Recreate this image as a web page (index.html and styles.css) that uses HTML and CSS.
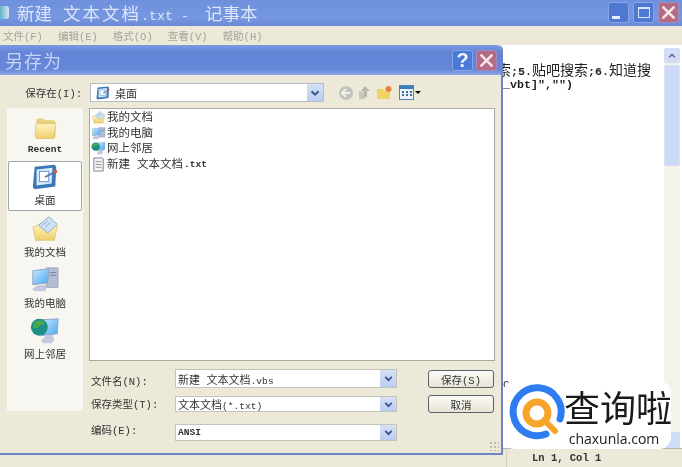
FILE: index.html
```html
<!DOCTYPE html>
<html lang="zh">
<head>
<meta charset="utf-8">
<title>另存为</title>
<link rel="stylesheet" href="styles.css">
</head>
<body>
<svg class="defs" width="0" height="0" aria-hidden="true">
  <defs>
    <linearGradient id="fold" x1="0" y1="0" x2="0" y2="1"><stop offset="0" stop-color="#fff4c0"/><stop offset="1" stop-color="#efcf6c"/></linearGradient>
    <linearGradient id="scr" x1="0" y1="0" x2="1" y2="1"><stop offset="0" stop-color="#c8eaff"/><stop offset="1" stop-color="#4aa6ee"/></linearGradient>
    <symbol id="i-folder" viewBox="0 0 32 32">
      <path d="M6 8c0-2 1-3 3-3h5l2 2h9c2 0 3 1 3 3v15c0 2-1 3-3 3H9c-2 0-3-1-3-3z" fill="#e8cf7c"/>
      <path d="M5 13c0-1 1-2 2-2h19c2 0 3 1 2 3l-2 12c0 1-1 2-2 2H8c-2 0-3-1-3-3z" fill="url(#fold)" stroke="#d6b862" stroke-width=".7"/>
    </symbol>
    <symbol id="i-desktop" viewBox="0 0 32 32">
      <path d="M5 5l21-2 2 2-1 21-22 3-2-2z" fill="#3b78b5"/>
      <path d="M7 8l17-2-1 17-16 2z" fill="#d9ecfa"/>
      <rect x="10" y="10" width="10" height="11" fill="#fff" stroke="#5b93c7"/>
      <path d="M16 16l10-5" stroke="#5478a8" stroke-width="2"/>
      <circle cx="27" cy="10" r="2" fill="#d8534a"/>
    </symbol>
    <symbol id="i-docs" viewBox="0 0 32 32">
      <path d="M3 14l10-4 16 3-3 15H6z" fill="url(#fold)" stroke="#d6b862" stroke-width=".7"/>
      <path d="M9 12L20 3l9 8-10 9z" fill="#cfe3f7" stroke="#8ea9c9"/>
      <path d="M13 12l6-5M16 14l6-5" stroke="#8ea9c9"/>
    </symbol>
    <symbol id="i-pc" viewBox="0 0 32 32">
      <rect x="17" y="3" width="13" height="21" rx="1" fill="#b3bcd2" stroke="#8790aa" stroke-width=".6"/>
      <path d="M21 8h7M21 11h7" stroke="#79829b"/>
      <path d="M3 6l17-2-1 15-16 2z" fill="url(#scr)" stroke="#8fa3c4"/>
      <path d="M7 22l8-1 3 3-2 4H6l-4-2z" fill="#c5c8de"/>
    </symbol>
    <symbol id="i-net" viewBox="0 0 32 32">
      <path d="M12 4l18-1-1 16-17 2z" fill="url(#scr)" stroke="#8fa3c4"/>
      <path d="M17 21l7-1 2 5-3 4h-9l-2-3z" fill="#c5c8de"/>
      <circle cx="10" cy="12" r="9" fill="#1f8f86"/>
      <path d="M4 7c4-3 9-3 12 0-2 3-3 3-5 2-1 4-5 5-8 3z" fill="#4aa84f"/>
    </symbol>
    <symbol id="i-txt" viewBox="0 0 16 16">
      <path d="M3 1h9l1 1v13H3z" fill="#f4f4f4" stroke="#7a7f88"/>
      <path d="M5 5h6M5 8h6M5 11h6" stroke="#8a8f98"/>
    </symbol>
    <symbol id="i-chev" viewBox="0 0 16 16">
      <path d="M4 6l4 4 4-4" fill="none" stroke="#37548c" stroke-width="2.2"/>
    </symbol>
    <symbol id="i-chev-up" viewBox="0 0 16 16">
      <path d="M4 10l4-4 4 4" fill="none" stroke="#5a74a8" stroke-width="2.2"/>
    </symbol>
    <symbol id="i-x" viewBox="0 0 16 16">
      <path d="M2.500 2.500l11 11M13.500 2.500l-11 11" fill="none" stroke="#f6e6e6" stroke-width="2.800" stroke-linecap="round"/>
    </symbol>
  </defs>
</svg>

<div class="desktop">
  <section class="notepad">
    <header class="title">
      <span class="title-icon"></span>
      <h1 class="title-text"><span class="cjk">新建</span> <span class="cjk cjk-wide">文本文档</span>.txt -  <span class="cjk">记事本</span></h1>
      <div class="caps">
        <button class="cap cap-min" aria-label="最小化"><span class="min-bar"></span></button>
        <button class="cap cap-max" aria-label="最大化"><span class="max-box"></span></button>
        <button class="cap cap-close" aria-label="关闭"><svg width="15" height="15"><use href="#i-x"/></svg></button>
      </div>
    </header>
    <nav class="menu">
      <span>文件(F)</span><span>编辑(E)</span><span>格式(O)</span><span>查看(V)</span><span>帮助(H)</span>
    </nav>
    <div class="edit">
      <div class="edit-text">
        <div class="edit-line"><span class="cjk14">索</span>;5.<span class="cjk14">贴吧搜索</span>;6.<span class="cjk14">知道搜</span></div>
        <div class="edit-line">_vbt]","")</div>
      </div>
      <div class="vscroll">
        <span class="vs-up"><svg width="12" height="12"><use href="#i-chev-up"/></svg></span>
        <span class="vs-thumb"></span>
        <span class="vs-down"></span>
      </div>
    </div>
    <footer class="status">
      <span class="status-main"></span>
      <span class="status-pos">Ln 1, Col 1</span>
    </footer>
  </section>

  <section class="dialog">
    <header class="dlg-title">
      <h2 class="dlg-title-text">另存为</h2>
      <div class="dlg-caps">
        <button class="cap cap-help" aria-label="帮助">?</button>
        <button class="cap cap-close" aria-label="关闭"><svg width="15" height="15"><use href="#i-x"/></svg></button>
      </div>
    </header>
    <div class="dlg-body">
      <div class="look-row">
        <label class="look-label">保存在(I):</label>
        <div class="combo look-combo">
          <svg class="ico16" width="16" height="16"><use href="#i-desktop"/></svg>
          <span class="combo-text">桌面</span>
          <span class="drop"><svg width="14" height="14"><use href="#i-chev"/></svg></span>
        </div>
        <div class="tools">
          <svg width="18" height="18" viewBox="0 0 18 18"><circle cx="9" cy="9" r="7" fill="#c3c3bd"/><path d="M13 9H6M9 5L5 9l4 4" fill="none" stroke="#eeeeea" stroke-width="2"/></svg>
          <svg width="18" height="18" viewBox="0 0 18 18"><path d="M3 15V7l6 1V15z" fill="#c9c6b8"/><path d="M9 2l5 5h-3v6H8V7H5z" fill="#b9b6a8"/></svg>
          <svg width="18" height="18" viewBox="0 0 18 18"><path d="M2 5h6l1 2h6v8H2z" fill="#f1d263"/><circle cx="13.500" cy="5" r="3" fill="#e8813a"/></svg>
          <span class="view-btn"><svg width="15" height="15" viewBox="0 0 15 15"><rect x=".5" y=".5" width="14" height="14" fill="#eef4fb" stroke="#4e86bc"/><rect x="1" y="1" width="13" height="3" fill="#3f7cc0"/><path d="M3 7h2M7 7h2M11 7h2M3 10h2M7 10h2M11 10h2" stroke="#3f6f9f" stroke-width="2"/></svg><i class="caret"></i></span>
        </div>
      </div>
      <div class="main-row">
        <aside class="places">
          <div class="place"><svg width="28" height="28"><use href="#i-folder"/></svg><span class="place-label place-recent">Recent</span></div>
          <div class="place place-on"><svg width="30" height="30"><use href="#i-desktop"/></svg><span class="place-label">桌面</span></div>
          <div class="place"><svg width="30" height="30"><use href="#i-docs"/></svg><span class="place-label">我的文档</span></div>
          <div class="place"><svg width="30" height="30"><use href="#i-pc"/></svg><span class="place-label">我的电脑</span></div>
          <div class="place"><svg width="30" height="30"><use href="#i-net"/></svg><span class="place-label">网上邻居</span></div>
        </aside>
        <div class="right-col">
          <ul class="files">
            <li class="file"><svg width="15" height="15"><use href="#i-docs"/></svg>我的文档</li>
            <li class="file"><svg width="15" height="15"><use href="#i-pc"/></svg>我的电脑</li>
            <li class="file"><svg width="15" height="15"><use href="#i-net"/></svg>网上邻居</li>
            <li class="file"><svg width="15" height="15"><use href="#i-txt"/></svg>新建 文本文档<span class="mono">.txt</span></li>
          </ul>
          <div class="form">
            <label class="f-label f-l1">文件名(N):</label>
            <div class="combo f-field f-h19"><span class="combo-text">新建 文本文档<span class="mono-thin">.vbs</span></span><span class="drop"><svg width="13" height="13"><use href="#i-chev"/></svg></span></div>
            <label class="f-label f-l2">保存类型(T):</label>
            <div class="combo f-field f-h16"><span class="combo-text">文本文档<span class="mono-thin">(*.txt)</span></span><span class="drop"><svg width="13" height="13"><use href="#i-chev"/></svg></span></div>
            <label class="f-label f-l3">编码(E):</label>
            <div class="combo f-field f-h17"><span class="combo-text mono">ANSI</span><span class="drop"><svg width="13" height="13"><use href="#i-chev"/></svg></span></div>
            <div class="btns">
              <button class="btn">保存(S)</button>
              <button class="btn">取消</button>
            </div>
          </div>
        </div>
      </div>
    </div>
    <span class="grip"></span>
  </section>

  <span class="stray">C</span>
  <aside class="mark">
    <svg class="mark-logo" width="58" height="58" viewBox="0 0 58 58">
      <path d="M38 51A24 24 0 1 1 52 36" fill="none" stroke="#2f7bf0" stroke-width="7" stroke-linecap="round"/>
      <circle cx="29" cy="30" r="11" fill="none" stroke="#f6a52b" stroke-width="7"/>
      <path d="M37 38l10 10" stroke="#f6a52b" stroke-width="6" stroke-linecap="round"/>
    </svg>
    <div class="mark-words">
      <div class="mark-cn">查询啦</div>
      <div class="mark-en">chaxunla.com</div>
    </div>
  </aside>
</div>
</body>
</html>
```
FILE: styles.css
```css
* { box-sizing: border-box; }
html, body { margin: 0; padding: 0; background: #ece9d8; }
.defs { position: absolute; }
.desktop {
  position: relative;
  width: 682px;
  height: 467px;
  overflow: hidden;
  font-family: "Liberation Mono", "Noto Sans CJK SC", monospace;
  color: #222;
  filter: blur(.45px);
}
button { font-family: inherit; padding: 0; }

/* notepad window */
.notepad { width: 682px; height: 467px; display: flex; flex-direction: column; background: #ece9d8; }
.title {
  height: 26px;
  flex: none;
  display: flex;
  align-items: center;
  background: linear-gradient(#6f90dc, #7596e0 70%, #6c8cd6);
  border-bottom: 1px solid #6a8bd4;
}
.title-icon { width: 9px; height: 13px; background: linear-gradient(90deg, #5fb2c8, #dbeaf2); border-radius: 0 3px 3px 0; margin-right: 8px; }
.title-text { margin: 0; flex: 1; font-size: 13.330px; font-weight: 400; color: #dce6f8; white-space: pre; }
.title-text .cjk { font-size: 17.500px; }
.title-text .cjk-wide { letter-spacing: 2px; margin-left: 3px; }
.caps { display: flex; gap: 4px; padding-right: 3px; }
.cap {
  width: 21px;
  height: 21px;
  border: 1px solid #86a4e6;
  border-radius: 3px;
  background: #4f78d2;
  color: #eef3fc;
  display: flex;
  align-items: center;
  justify-content: center;
  font-size: 15px;
  font-weight: 700;
  position: relative;
}
.cap-close { background: #b56a85; border-color: #a58ac0; }
.cap-help { background: #4b79d8; font-family: "Liberation Sans", sans-serif; font-size: 20px; }
.min-bar { width: 8px; height: 3px; background: #e8eefb; margin: 10px 6px 0 0; }
.max-box { width: 12px; height: 11px; border: 1px solid #dde6f7; border-top-width: 2px; }
.menu {
  height: 19px;
  flex: none;
  display: flex;
  align-items: center;
  gap: 15px;
  padding-left: 3px;
  font-size: 10.500px;
  color: #a5a499;
  background: #ece9d8;
}
.edit { flex: 1; min-height: 0; display: flex; background: #fff; padding-top: 3px; border-bottom: 1px solid #b8b6aa; }
.edit-text { flex: 1; padding: 16px 0 0 497px; font-size: 11.670px; font-weight: 700; color: #222; }
.edit-line { height: 14px; line-height: 14px; white-space: pre; }
.edit-line + .edit-line { padding-left: 6px; }
.cjk14 { font-size: 14px; font-weight: 400; }
.vscroll { width: 16px; margin-right: 2px; background: #f3f3ec; display: flex; flex-direction: column; gap: 2px; }
.vs-up { height: 15px; background: #d3def6; border-radius: 2px; display: flex; align-items: center; justify-content: center; }
.vs-thumb { height: 101px; background: #cbd8f6; border: 1px solid #d6e0f8; border-radius: 2px; }
.vs-down { height: 16px; margin-top: auto; background: #cfdcf6; border-radius: 2px; }
.status { height: 18px; flex: none; display: flex; align-items: center; font-size: 10.500px; font-weight: 700; color: #333; }
.status-main { width: 507px; height: 100%; border-right: 1px solid #d5d2c2; }
.status-pos { padding-left: 25px; }

/* save dialog */
.dialog {
  position: absolute;
  left: 0;
  top: 45px;
  width: 503px;
  height: 410px;
  display: flex;
  flex-direction: column;
  background: #ece9d8;
  border-right: 2px solid #6f84c8;
  border-bottom: 2px solid #6f84c8;
  border-top-right-radius: 5px;
}
.dlg-title {
  height: 30px;
  flex: none;
  display: flex;
  align-items: center;
  justify-content: space-between;
  padding: 0 4px 0 5px;
  background: linear-gradient(#7c9ae0, #6484d8 25%, #6586d9 80%, #88a5e6);
  border-top-right-radius: 5px;
}
.dlg-title-text { margin: 0; font-size: 18px; font-weight: 400; color: #c6d6f4; font-family: "Noto Sans CJK SC", sans-serif; letter-spacing: 1px; }
.dlg-caps { display: flex; gap: 3px; }
.dlg-body { flex: 1; min-height: 0; padding: 8px 6px 0 7px; display: flex; flex-direction: column; gap: 6px; }

.look-row { height: 19px; flex: none; display: flex; align-items: center; }
.look-label { width: 75px; font-size: 10.500px; color: #333; text-align: right; white-space: nowrap; flex: none; margin-right: 1px; }
.combo {
  display: flex;
  align-items: center;
  background: #fff;
  border: 1px solid #b5bcc6;
  font-size: 11px;
}
.look-combo { width: 234px; height: 19px; margin-left: 7px; padding-left: 4px; gap: 4px; }
.ico16 { flex: none; }
.combo-text { flex: 1; white-space: nowrap; overflow: hidden; color: #333; }
.drop { width: 16px; height: 100%; flex: none; background: linear-gradient(#d6e1f8, #bccdf2); display: flex; align-items: center; justify-content: center; }
.tools { display: flex; align-items: center; gap: 1px; padding-left: 13px; color: #000; }
.view-btn { display: flex; align-items: center; gap: 1px; margin-left: 5px; }
.caret { width: 0; height: 0; border: 3.500px solid transparent; border-top-color: #000; border-bottom: 0; }

.main-row { flex: 1; min-height: 0; display: flex; gap: 6px; }
.places {
  width: 76px;
  height: 303px;
  flex: none;
  background: #f7f6f0;
  display: grid;
  grid-template-rows: repeat(5, 51px);
  justify-items: center;
  padding-top: 2px;
}
.place { width: 74px; display: flex; flex-direction: column; align-items: center; justify-content: flex-end; padding-bottom: 2px; font-size: 10.500px; color: #333; border: 1px solid transparent; }
.place-on { background: #fff; border-color: #9fa6ad; border-radius: 2px; height: 50px; }
.place-label { line-height: 13px; white-space: nowrap; margin-top: 3px; }
.place-recent { margin-bottom: 2px; margin-top: 1px; font-size: 9.600px; font-weight: 700; }

.right-col { flex: 1; min-width: 0; display: flex; flex-direction: column; gap: 8px; }
.files {
  margin: 0;
  height: 253px;
  flex: none;
  list-style: none;
  padding: 1px 0 0 1px;
  background: #fff;
  border: 1px solid #a9a99f;
  font-size: 11.500px;
  color: #333;
}
.file { height: 15.600px; display: flex; align-items: center; gap: 1px; white-space: pre; line-height: 15px; }
.mono { font-family: "Liberation Mono", monospace; font-size: 9.600px; font-weight: 700; }
.mono-thin { font-family: "Liberation Mono", monospace; font-size: 9.600px; }

.form {
  display: grid;
  grid-template-columns: 86px 222px 1fr;
  grid-template-rows: 27px 28px 17px;
  align-items: start;
}
.f-label { font-size: 10.500px; color: #333; padding-left: 2px; white-space: nowrap; grid-column: 1; }
.f-l1 { padding-top: 4px; }
.f-l2 { padding-top: 0; }
.f-l3 { margin-top: -2px; }
.f-field { grid-column: 2; padding-left: 2px; border-color: #c3c3b8; }
.f-h19 { height: 19px; }
.f-h16 { height: 16px; }
.f-h17 { height: 17px; }
.btns { grid-column: 3; grid-row: 1 / span 3; display: flex; flex-direction: column; gap: 7px; padding: 1px 0 0 31px; }
.btn {
  width: 66px;
  height: 18px;
  background: linear-gradient(#fbfbf8, #e6e3d6);
  border: 1px solid #5d6168;
  border-radius: 3px;
  font-size: 10.500px;
  color: #333;
}
.grip {
  position: absolute;
  right: 2px;
  bottom: 2px;
  width: 10px;
  height: 10px;
  background-image: radial-gradient(#bdbbad 1px, transparent 1.200px);
  background-size: 4px 4px;
}

/* watermark */
.stray { position: absolute; left: 503px; top: 379px; font-size: 11px; line-height: 13px; color: #333; }
.mark {
  position: absolute;
  left: 503px;
  top: 381px;
  width: 168px;
  height: 68px;
  display: flex;
  align-items: flex-start;
  background: #fff;
  border-radius: 12px;
  padding: 2px 0 0 5px;
}
.mark-logo { flex: none; }
.mark-words { display: flex; flex-direction: column; align-items: center; width: 106px; padding-top: 2px; margin-left: -1px; }
.mark-cn { font-family: "Noto Sans CJK SC", sans-serif; font-size: 36px; line-height: 42px; color: #1a1a1a; white-space: nowrap; }
.mark-en { font-family: "Open Sans", sans-serif; font-size: 14px; line-height: 17px; margin-top: 3px; margin-right: 8px; color: #1a1a1a; white-space: nowrap; }
```
